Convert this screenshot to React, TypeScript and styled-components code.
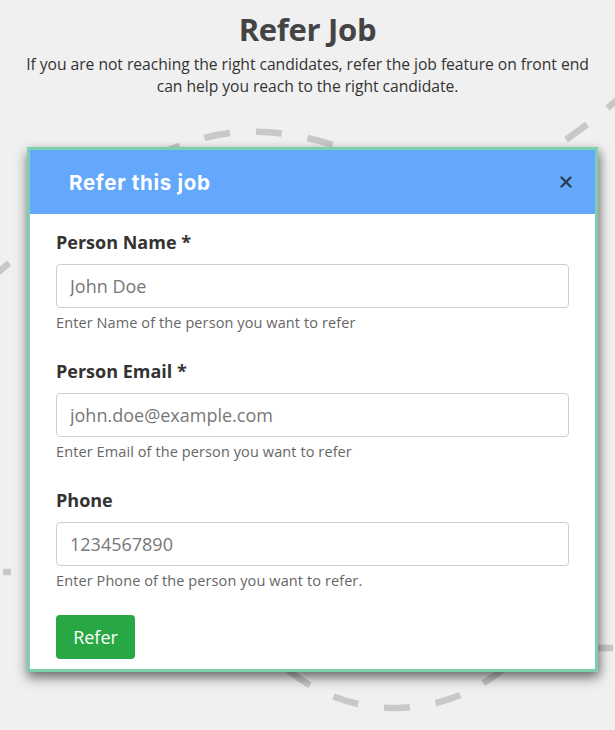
import React from "react";
import styled, { createGlobalStyle } from "styled-components";

const Global = createGlobalStyle`
  html, body { margin: 0; padding: 0; background: #f0f0f0; }
  body { font-family: "Open Sans", "Liberation Sans", sans-serif; }
  * { box-sizing: border-box; }
`;

const Page = styled.div`
  position: relative;
  width: 615px;
  height: 730px;
  overflow: hidden;
  background: #f0f0f0;
  display: flex;
  flex-direction: column;
  align-items: center;
`;

const Backdrop = styled.svg`
  position: absolute;
  left: 0;
  top: 0;
  width: 615px;
  height: 730px;
  z-index: 0;
`;

const Header = styled.header`
  position: relative;
  z-index: 1;
  display: flex;
  flex-direction: column;
  align-items: center;
  padding-top: 9px;
`;

const Title = styled.h1`
  margin: 0;
  font-family: "Open Sans", sans-serif;
  font-weight: 700;
  font-size: 31px;
  line-height: 40px;
  color: #444;
  letter-spacing: -0.3px;
`;

const Subtitle = styled.p`
  margin: 4px 0 0;
  width: 580px;
  text-align: center;
  font-size: 15.7px;
  line-height: 22px;
  color: #333;
  letter-spacing: -0.05px;
`;

const Card = styled.section`
  position: relative;
  z-index: 1;
  align-self: flex-start;
  margin: 50px 0 0 27px;
  width: 571px;
  border: 3px solid #7dcfae;
  background: #fff;
  box-shadow: 0 6px 12px rgba(0, 0, 0, 0.45), 3px 3px 8px rgba(0, 0, 0, 0.2);
`;

const CardHead = styled.div`
  height: 64px;
  background: #64a8fe;
  display: flex;
  align-items: center;
  justify-content: space-between;
  padding: 0 20px 0 39px;
`;

const CardTitle = styled.h2`
  margin: 0;
  font-family: "Inter", "Lato", sans-serif;
  font-weight: 700;
  font-size: 20.5px;
  color: #fff;
  letter-spacing: 0.7px;
`;

const Close = styled.button`
  border: none;
  background: none;
  padding: 0;
  width: 18px;
  height: 18px;
  display: flex;
  align-items: center;
  justify-content: center;
  cursor: pointer;
`;

const Body = styled.form`
  padding: 16px 26px 10px;
  display: flex;
  flex-direction: column;
`;

const Field = styled.div`
  display: flex;
  flex-direction: column;
  margin-bottom: 26px;
`;

const Label = styled.label`
  font-weight: 700;
  font-size: 18px;
  line-height: 24px;
  color: #333;
  margin-bottom: 10px;
`;

const Input = styled.input`
  height: 44px;
  width: 100%;
  border: 1px solid #cfcfcf;
  border-radius: 4px;
  padding: 0 13px;
  font-family: "Open Sans", sans-serif;
  font-size: 18px;
  color: #333;
  outline: none;
  &::placeholder { color: #777; }
`;

const Help = styled.small`
  margin-top: 5px;
  font-size: 14.5px;
  line-height: 20px;
  color: #666;
  letter-spacing: 0.1px;
`;

const Submit = styled.button`
  align-self: flex-start;
  margin-top: -2px;
  height: 44px;
  width: 79px;
  border: none;
  border-radius: 4px;
  background: #28a745;
  color: #fff;
  font-family: "Open Sans", sans-serif;
  font-size: 18px;
  cursor: pointer;
`;

const fields = [
  { id: "name", label: "Person Name *", ph: "John Doe", help: "Enter Name of the person you want to refer" },
  { id: "email", label: "Person Email *", ph: "john.doe@example.com", help: "Enter Email of the person you want to refer" },
  { id: "phone", label: "Phone", ph: "1234567890", help: "Enter Phone of the person you want to refer." },
];

export default function App() {
  return (
    <Page>
      <Global />
      <Backdrop viewBox="0 0 615 730">
        <g fill="none" stroke="#c8c8c8" strokeWidth="6.5" strokeDasharray="26 26">
          <path d="M-6 276 C 70 210, 150 138, 240 132 C 320 128, 390 165, 440 200" strokeDashoffset="6" />
          <circle cx="395" cy="538" r="170" strokeDashoffset="8" />
          <path d="M540 158 C 565 140, 590 125, 640 80" strokeDashoffset="20" />
        </g>
        <g stroke="#c8c8c8" strokeWidth="6.5">
          <line x1="3" y1="572" x2="11" y2="572" />
          <line x1="598" y1="648" x2="613" y2="648" />
        </g>
      </Backdrop>
      <Header>
        <Title>Refer Job</Title>
        <Subtitle>
          If you are not reaching the right candidates, refer the job feature on front end can help you reach to the right candidate.
        </Subtitle>
      </Header>
      <Card>
        <CardHead>
          <CardTitle>Refer this job</CardTitle>
          <Close type="button" aria-label="Close">
            <svg width="12" height="12" viewBox="0 0 12 12">
              <path d="M1.5 1.5 L10.5 10.5 M10.5 1.5 L1.5 10.5" stroke="#2c3e50" strokeWidth="2.4" strokeLinecap="round" />
            </svg>
          </Close>
        </CardHead>
        <Body onSubmit={(e) => e.preventDefault()}>
          {fields.map((f) => (
            <Field key={f.id}>
              <Label htmlFor={f.id}>{f.label}</Label>
              <Input id={f.id} placeholder={f.ph} />
              <Help>{f.help}</Help>
            </Field>
          ))}
          <Submit type="submit">Refer</Submit>
        </Body>
      </Card>
    </Page>
  );
}
